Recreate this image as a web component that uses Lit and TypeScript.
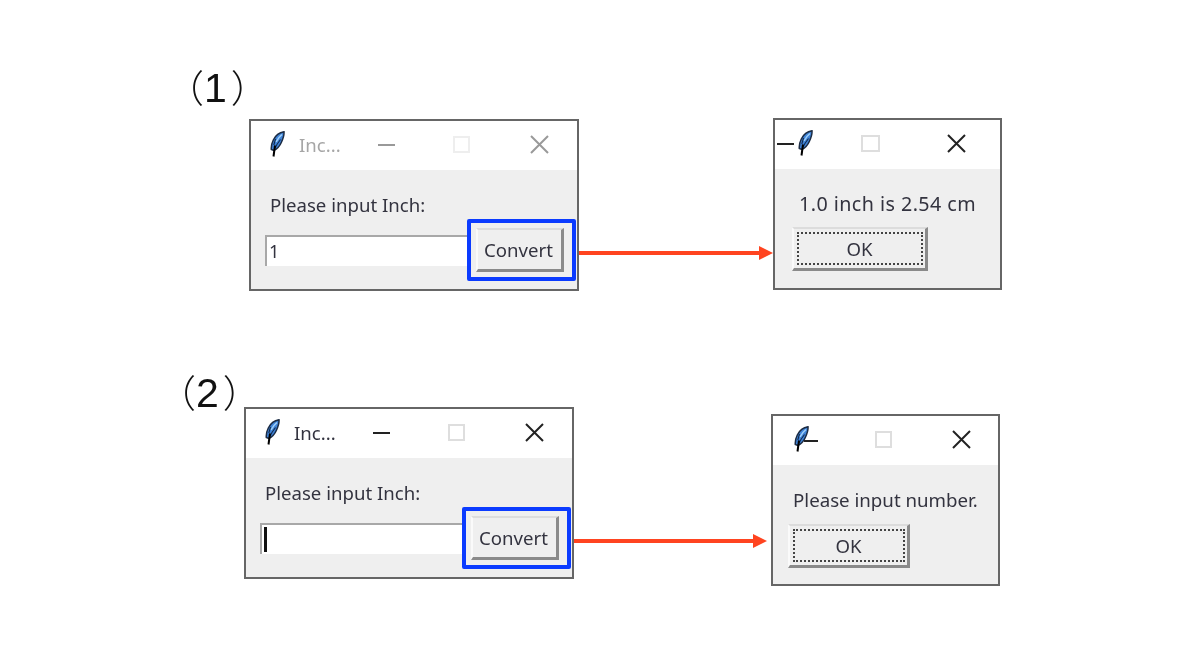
import { LitElement, html, css, nothing } from "lit";
import { customElement, property } from "lit/decorators.js";

const feather = html`<svg class="feather" viewBox="0 0 16 26" aria-hidden="true">
  <path d="M15 .8C10.500 1.500 6.500 4.500 4.300 9C2.800 12 2 15 2.300 18.500L4.800 19.500C8 18 10.800 15 12.300 11.500C14 7.800 15.300 4 15 .8Z" fill="#3f83d8" stroke="#1c2c44" stroke-width="1.500"/>
  <path d="M13 3.500C10.500 5.500 8.500 8 7 11" fill="none" stroke="#9fd0f8" stroke-width="1.600"/>
  <path d="M11.500 8.500C9.500 11 7.500 14 6 17M6.500 8L4.800 14" fill="none" stroke="#10294c" stroke-width="1.100"/>
  <path d="M6 14.500L4.500 25.500" fill="none" stroke="#000" stroke-width="2"/>
</svg>`;

@customElement("tk-window")
class TkWindow extends LitElement {
  @property() variant = "a";
  @property() label = "";
  @property({ type: Boolean }) caret = false;
  @property() value = "";

  static styles = css`
    :host { display: block; position: absolute; filter: blur(0.45px); }
    .win {
      box-sizing: border-box; height: 172px; border: 2px solid #666;
      background: #efefef; display: flex; flex-direction: column;
      font-family: "Noto Sans", "Open Sans", sans-serif; color: #33333f;
    }
    .main { width: 330px; }
    .dlg { width: 229px; }
    .title { box-sizing: border-box; height: 49px; padding-bottom: 2px; flex: none; background: #fff; display: flex; align-items: center; }
    .feather { width: 16px; height: 26px; flex: none; position: relative; margin-top: -2px; }
    .name { font-size: 18.600px; line-height: 24px; width: 42px; white-space: nowrap; flex: none; }
    .min { width: 17px; height: 2px; background: #222; flex: none; position: relative; }
    .max { box-sizing: border-box; width: 17px; height: 17px; border: 2px solid #dedede; flex: none; }
    .close { width: 19px; height: 19px; flex: none; display: block; }
    .close path { stroke: #222; stroke-width: 2; fill: none; }

    .a .title, .c .title { padding-left: 18px; }
    .a .name, .c .name { margin-left: 14px; }
    .a .min, .c .min { margin-left: 37px; }
    .a .max, .c .max { margin-left: 58px; }
    .a .close, .c .close { margin-left: 60px; }
    .a .name { color: #a6a6a6; }
    .a .min { background: #999; }
    .a .max { border-color: #eee; }
    .a .close path { stroke: #999; }

    .b .title { padding-left: 2px; }
    .b .feather { margin-left: 3px; }
    .b .max { margin-left: 48px; width: 19px; }
    .b .close { margin-left: 67px; }

    .d .title { padding-left: 20px; }
    .d .min { width: 14px; margin-left: -5px; margin-top: 2px; }
    .d .max { margin-left: 57px; }
    .d .close { margin-left: 60px; }

    .body { flex: 1; display: flex; flex-direction: column; }
    .a .body, .c .body { padding: 22px 0 0 14px; }
    .prompt { font-size: 18.600px; line-height: 26px; white-space: nowrap; }
    .a .prompt, .c .prompt { margin-left: 5px; }
    .row { display: flex; align-items: center; margin-top: 10px; }
    .entry {
      box-sizing: border-box; width: 202px; height: 31px; background: #fff;
      border-top: 2px solid #a8a8a8; border-left: 2px solid #a8a8a8;
      font-size: 18px; line-height: 29px; padding-left: 2px; margin-top: 1px;
      display: flex; align-items: center;
    }
    .caret { width: 3px; height: 25px; background: #111; }
    .btn {
      box-sizing: border-box; position: relative; background: #efefef;
      border-style: solid; border-width: 2px 3px 3px 2px;
      border-color: #dcdcdc #8a8a8a #8a8a8a #fafafa;
      display: flex; align-items: center; justify-content: center;
      font-size: 18.600px;
    }
    .convert { width: 88px; height: 44px; margin-left: 9px; padding-right: 2px; }
    .ring {
      position: absolute; inset: -11px -15px -12px -11px;
      border: 4px solid #0b3bff; border-radius: 2px;
    }
    .dlg .body { padding-top: 22px; }
    .b .prompt { margin-left: 24px; font-size: 19.700px; letter-spacing: 0.450px; }
    .d .prompt { margin-left: 20px; font-size: 18.700px; }
    .b .ok { width: 136px; height: 44px; margin-left: 17px; margin-top: 10px; }
    .d .ok { width: 122px; height: 44px; margin-left: 15px; margin-top: 11px; }
    .focus {
      box-sizing: border-box; width: calc(100% - 5px); height: calc(100% - 6px);
      border: 2px dotted #444; display: flex; align-items: center; justify-content: center;
      margin: 0 0 1px 0;
    }
  `;

  private caption(part: "min" | "max" | "close") {
    if (part === "min") return html`<span class="min"></span>`;
    if (part === "max") return html`<span class="max"></span>`;
    return html`<svg class="close" viewBox="0 0 19 19" aria-hidden="true"><path d="M1 1L18 18M18 1L1 18"/></svg>`;
  }

  render() {
    const v = this.variant;
    const isMain = v === "a" || v === "c";
    return html`<div class="win ${isMain ? "main" : "dlg"} ${v}">
      <div class="title">
        ${v === "b" ? html`${this.caption("min")}${feather}` : feather}
        ${isMain ? html`<span class="name">Inc...</span>` : nothing}
        ${v !== "b" ? this.caption("min") : nothing}
        ${this.caption("max")}
        ${this.caption("close")}
      </div>
      <div class="body">
        <div class="prompt">${this.label}</div>
        ${isMain
          ? html`<div class="row">
              <div class="entry">${this.caret ? html`<span class="caret"></span>` : this.value}</div>
              <div class="btn convert">Convert<span class="ring"></span></div>
            </div>`
          : html`<div class="btn ok"><div class="focus">OK</div></div>`}
      </div>
    </div>`;
  }
}

@customElement("app-root")
class AppRoot extends LitElement {
  static styles = css`
    :host { display: block; position: relative; width: 1200px; height: 665px; background: #fff; overflow: hidden; }
    .tag {
      position: absolute; font-family: "Noto Sans CJK JP", "Liberation Sans", sans-serif;
      font-size: 38px; line-height: 44px; color: #111; white-space: nowrap; font-weight: 300;
      filter: blur(0.3px);
    }
    .num { font-family: "Liberation Sans", sans-serif; font-size: 41px; font-weight: 400; margin-right: 4px; }
    .tag1 { left: 166px; top: 64px; }
    .tag2 { left: 158px; top: 369px; }
    .win-a { left: 249px; top: 119px; }
    .win-b { left: 773px; top: 118px; }
    .win-c { left: 244px; top: 407px; }
    .win-d { left: 771px; top: 414px; }
    .arrow { position: absolute; display: flex; align-items: center; height: 14px; }
    .arrow1 { left: 579px; top: 246px; width: 194px; }
    .arrow2 { left: 574px; top: 534px; width: 193px; }
    .shaft { flex: 1; height: 4px; background: #ff4420; }
    .head { width: 0; height: 0; border-style: solid; border-width: 7px 0 7px 14px; border-color: transparent transparent transparent #ff4420; }
  `;

  render() {
    return html`
      <div class="tag tag1">（<span class="num">1</span>）</div>
      <tk-window class="win-a" variant="a" label="Please input Inch:" value="1"></tk-window>
      <div class="arrow arrow1"><div class="shaft"></div><div class="head"></div></div>
      <tk-window class="win-b" variant="b" label="1.0 inch is 2.54 cm"></tk-window>
      <div class="tag tag2">（<span class="num">2</span>）</div>
      <tk-window class="win-c" variant="c" label="Please input Inch:" caret></tk-window>
      <div class="arrow arrow2"><div class="shaft"></div><div class="head"></div></div>
      <tk-window class="win-d" variant="d" label="Please input number."></tk-window>
    `;
  }
}
